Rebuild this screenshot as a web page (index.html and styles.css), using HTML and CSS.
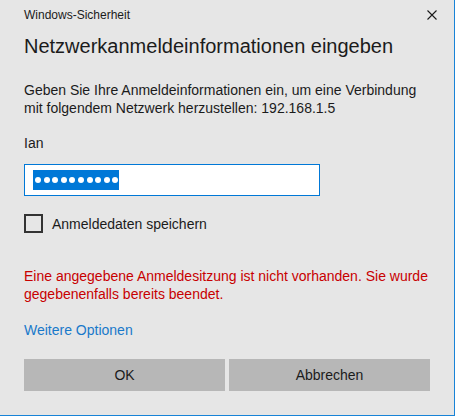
FILE: index.html
```html
<!DOCTYPE html>
<html lang="de">
<head>
<meta charset="utf-8">
<title>Windows-Sicherheit</title>
<link rel="stylesheet" href="styles.css">
</head>
<body>
<div class="dialog">
  <div class="titlebar">
    <span class="app">Windows-Sicherheit</span>
    <svg class="close" width="10" height="10" viewBox="0 0 10 10"><path d="M0.5 0.5L9.5 9.5M9.5 0.5L0.5 9.5" stroke="#1a1a1a" stroke-width="1.1" fill="none"/></svg>
  </div>
  <h1 class="title">Netzwerkanmeldeinformationen eingeben</h1>
  <p class="desc">Geben Sie Ihre Anmeldeinformationen ein, um eine Verbindung<br>mit folgendem Netzwerk herzustellen: 192.168.1.5</p>
  <div class="user">Ian</div>
  <div class="input">
    <span class="sel"><i></i><i></i><i></i><i></i><i></i><i></i><i></i><i></i><i></i><i></i></span>
  </div>
  <label class="check"><span class="box"></span><span>Anmeldedaten speichern</span></label>
  <p class="error">Eine angegebene Anmeldesitzung ist nicht vorhanden. Sie wurde<br>gegebenenfalls bereits beendet.</p>
  <a class="more">Weitere Optionen</a>
  <div class="buttons">
    <button class="btn">OK</button>
    <button class="btn">Abbrechen</button>
  </div>
</div>
</body>
</html>
```
FILE: styles.css
```css
html, body {
  margin: 0;
  padding: 0;
  background: #e6e6e6;
}
.dialog {
  width: 455px;
  height: 416px;
  box-sizing: border-box;
  border-right: 1px solid #1883d7;
  border-bottom: 1px solid #1883d7;
  padding: 0 24px;
  font-family: "Liberation Sans", Arial, sans-serif;
  font-size: 14px;
  color: #1b1b1b;
  overflow: hidden;
}
.titlebar {
  height: 30px;
  display: flex;
  align-items: center;
  justify-content: space-between;
}
.app {
  font-size: 12px;
  line-height: 30px;
}
.close {
  margin-right: -7px;
  flex-shrink: 0;
}
.title {
  margin: 1px 0 0 0;
  font-size: 20px;
  font-weight: 400;
  line-height: 30px;
}
.desc {
  margin: 20px 0 0 0;
  line-height: 18px;
}
.user {
  margin-top: 16px;
  line-height: 20px;
}
.input {
  margin-top: 11px;
  width: 296px;
  height: 32px;
  box-sizing: border-box;
  border: 1px solid #0078d7;
  background: #fff;
  padding: 5px 0 0 8px;
}
.sel {
  display: flex;
  align-items: center;
  gap: 2.6px;
  height: 20px;
  width: 86px;
  box-sizing: border-box;
  padding-left: 2px;
  background: #0078d7;
}
.sel i {
  flex-shrink: 0;
  width: 6px;
  height: 6px;
  border-radius: 50%;
  background: #fff;
}
.check {
  margin-top: 18px;
  display: flex;
  align-items: center;
  gap: 9px;
}
.box {
  width: 19px;
  height: 19px;
  box-sizing: border-box;
  border: 2px solid #333;
}
.error {
  margin: 34px 0 0 0;
  color: #c80000;
  line-height: 18px;
}
.more {
  display: block;
  margin-top: 17px;
  color: #1979ca;
  line-height: 20px;
}
.buttons {
  margin-top: 19px;
  display: flex;
  gap: 4px;
}
.btn {
  width: 201px;
  height: 32px;
  border: none;
  background: #b7b7b7;
  font-family: "Liberation Sans", Arial, sans-serif;
  font-size: 14px;
  color: #1b1b1b;
  padding: 0;
}
```
